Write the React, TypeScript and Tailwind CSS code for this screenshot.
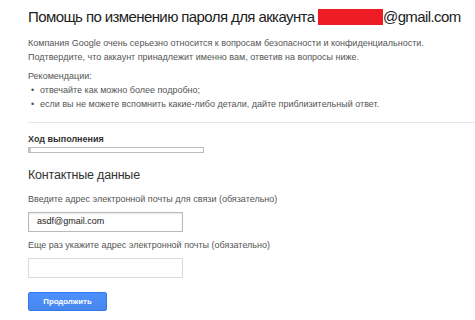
export default function App() {
  return (
    <div className="w-[475px] h-[320px] overflow-hidden bg-white pl-[28px] pt-[7px] font-['Liberation_Sans',Arial,sans-serif]">
      <h1 className="text-[15px] leading-[20px] tracking-[-0.6px] text-[#222] whitespace-nowrap">
        Помощь по изменению пароля для аккаунта{" "}
        <span className="inline-block w-[65px] h-[16px] bg-[#ee1c25] align-[-3px]" />
        @gmail.com
      </h1>

      <div className="mt-[9px] text-[9px] leading-[14px] text-[#555]">
        <p>Компания Google очень серьезно относится к вопросам безопасности и конфиденциальности.</p>
        <p>Подтвердите, что аккаунт принадлежит именно вам, ответив на вопросы ниже.</p>
        <p className="mt-[5px]">Рекомендации:</p>
        <ul>
          <li className="flex">
            <span className="w-[12px] pl-[3px]">•</span>
            отвечайте как можно более подробно;
          </li>
          <li className="flex">
            <span className="w-[12px] pl-[3px]">•</span>
            если вы не можете вспомнить какие-либо детали, дайте приблизительный ответ.
          </li>
        </ul>
      </div>

      <div className="mt-[11px] border-t border-[#e5e5e5]" />

      <div className="mt-[9px] text-[9px] leading-[14px] font-bold text-[#333]">Ход выполнения</div>
      <div className="mt-[1px] w-[176px] h-[6px] border border-[#bbb] bg-white flex">
        <div className="w-[2px] h-full bg-[#ccc]" />
      </div>

      <h2 className="mt-[13px] text-[12.5px] leading-[18px] tracking-[-0.2px] text-[#333]">Контактные данные</h2>

      <label className="block mt-[8px] text-[9px] leading-[14px] text-[#555]">
        Введите адрес электронной почты для связи (обязательно)
      </label>
      <div className="mt-[6px] w-[155px] h-[20px] border border-[#b9b9b9] shadow-[inset_0_1px_2px_rgba(0,0,0,0.1)] flex items-center pl-[8px] text-[9px] text-[#222]">
        asdf@gmail.com
      </div>

      <label className="block mt-[6px] text-[9px] leading-[14px] text-[#555]">
        Еще раз укажите адрес электронной почты (обязательно)
      </label>
      <div className="mt-[6px] w-[155px] h-[20px] border border-[#d9d9d9]" />

      <button className="mt-[14px] w-[79px] h-[19px] rounded-[2px] border border-[#3079ed] bg-gradient-to-b from-[#4d90fe] to-[#4787ed] text-white text-[7.8px] font-bold flex items-center justify-center">
        Продолжить
      </button>
    </div>
  );
}
